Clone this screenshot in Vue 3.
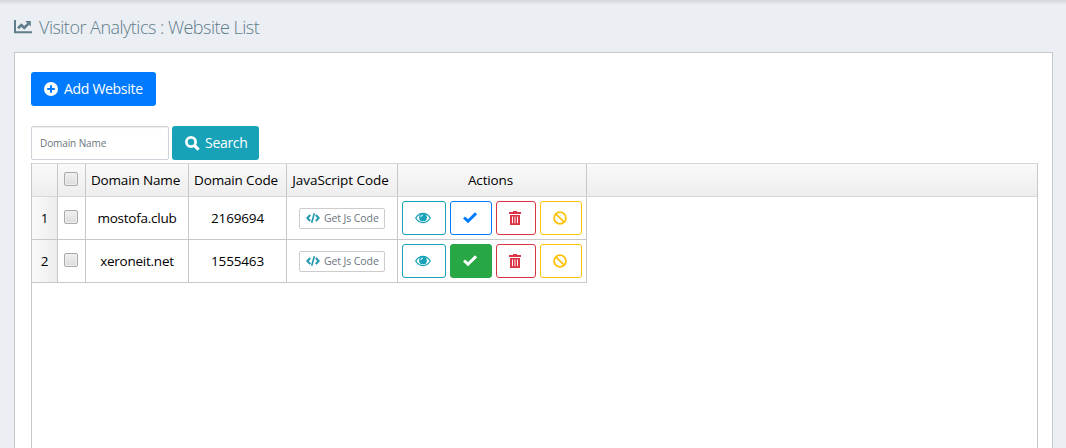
<script setup>
const rows = [
  { id: 1, domain: 'mostofa.club', code: '2169694', active: false },
  { id: 2, domain: 'xeroneit.net', code: '1555463', active: true },
]
</script>

<template>
  <div class="page">
    <h1 class="title">
      <svg class="chart" viewBox="0 0 18 14" width="18" height="14">
        <path d="M1 0v12.2h17" fill="none" stroke="currentColor" stroke-width="2" />
        <path d="M4 8.2L7.3 5L10.3 7.8L14.5 3.6" fill="none" stroke="currentColor" stroke-width="2.7" />
        <path d="M11.2 1H16.8V6.6Z" fill="currentColor" />
      </svg>
      <span>Visitor Analytics : Website List</span>
    </h1>
    <main class="panel">
      <button class="btn add">
        <svg viewBox="0 0 14 14" width="14" height="14">
          <circle cx="7" cy="7" r="7" fill="#fff" />
          <path d="M7 3.2v7.6M3.2 7h7.6" stroke="#007bff" stroke-width="2" />
        </svg>
        <span>Add Website</span>
      </button>
      <div class="toolbar">
        <input class="field" type="text" placeholder="Domain Name" />
        <button class="btn search">
          <svg viewBox="0 0 15 15" width="15" height="15">
            <circle cx="6" cy="6" r="4.6" fill="none" stroke="#fff" stroke-width="2.8" />
            <path d="M9.3 9.3L13.6 13.6" stroke="#fff" stroke-width="3.2" />
          </svg>
          <span>Search</span>
        </button>
      </div>
      <section class="grid">
        <div class="row head">
          <div class="cell"></div>
          <div class="cell"><i class="box"></i></div>
          <div class="cell"><span>Domain Name</span></div>
          <div class="cell"><span>Domain Code</span></div>
          <div class="cell"><span class="wide">JavaScript Code</span></div>
          <div class="cell"><span>Actions</span></div>
        </div>
        <div v-for="r in rows" :key="r.id" class="row body">
          <div class="cell num">{{ r.id }}</div>
          <div class="cell"><i class="box"></i></div>
          <div class="cell domain"><span>{{ r.domain }}</span></div>
          <div class="cell"><span>{{ r.code }}</span></div>
          <div class="cell">
            <button class="js">
              <svg viewBox="0 0 14 10" width="14" height="10" fill="none" stroke="#2397ad" stroke-width="2">
                <path d="M4.2 2L1.3 5L4.2 8M9.8 2L12.7 5L9.8 8" />
                <path d="M8.3 0.3L5.7 9.7" stroke-width="1.6" />
              </svg>
              <span>Get Js Code</span>
            </button>
          </div>
          <div class="cell actions">
            <button class="act view">
              <svg viewBox="0 0 16 12" width="16" height="12">
                <path d="M.7 6C4.3-.1 11.7-.1 15.3 6C11.7 12.1 4.3 12.1 .7 6Z" fill="none" stroke="currentColor" stroke-width="1.2" />
                <circle cx="8" cy="5.4" r="3.9" fill="currentColor" />
                <path d="M5.8 5.1Q5.9 3.1 8 3" fill="none" stroke="#fff" stroke-width="1" />
              </svg>
            </button>
            <button class="act check" :class="{ on: r.active }">
              <svg viewBox="0 0 14 11" width="14" height="11">
                <path d="M1 5.5L5 9.2L13 1.3" fill="none" stroke="currentColor" stroke-width="3" />
              </svg>
            </button>
            <button class="act trash">
              <svg viewBox="0 0 12 14" width="12" height="14">
                <path d="M0 1H4V0H8V1H12V3H0Z" fill="currentColor" />
                <path d="M1 4H11V14H1Z" fill="currentColor" />
                <path d="M3.5 5.5V12.2M6 5.5V12.2M8.5 5.5V12.2" stroke="#fff" stroke-width=".95" />
              </svg>
            </button>
            <button class="act ban">
              <svg viewBox="0 0 14 14" width="14" height="14" fill="none" stroke="currentColor" stroke-width="1.8">
                <circle cx="7" cy="7" r="5.9" />
                <path d="M2.8 2.8L11.2 11.2" />
              </svg>
            </button>
          </div>
        </div>
      </section>
    </main>
  </div>
</template>

<style>
html, body { margin: 0; overflow: hidden; }
</style>

<style scoped>
* { box-sizing: border-box; }
.page {
  height: 448px;
  overflow: hidden;
  padding: 0 13px 0 14px;
  background: linear-gradient(#d2d6db 0, #dde1e6 2px, #ebeef3 5px, #ebeef3 100%);
  font-family: "Open Sans", "Noto Sans", sans-serif;
  font-size: 13.5px;
  letter-spacing: -0.15px;
  color: #000;
}
svg { display: block; flex: none; }
span { white-space: nowrap; }
button { font: inherit; letter-spacing: inherit; padding: 0; margin: 0; }
.title {
  display: flex;
  align-items: center;
  gap: 7px;
  height: 52px;
  margin: 0;
  padding-top: 2px;
  font-size: 18px;
  font-weight: 300;
  color: #607d8b;
  letter-spacing: -0.51px;
}
.panel {
  height: 420px;
  padding: 19px 14px 0 16px;
  border: 1px solid #c8c8c8;
  background: #fff;
}
.btn {
  display: flex;
  align-items: center;
  height: 34px;
  border: 0;
  border-radius: 3px;
  color: #fff;
  font-size: 14px;
  letter-spacing: -0.3px;
}
.btn span { padding-bottom: 2px; }
.add { width: 125px; padding-left: 13px; gap: 6px; background: #007bff; }
.search { width: 87px; padding-left: 13px; gap: 5px; background: #17a2b8; }
.toolbar { display: flex; gap: 3px; margin-top: 20px; }
.field {
  width: 138px;
  height: 34px;
  padding: 0 8px;
  border: 1px solid #ced4da;
  border-radius: 2px;
  box-shadow: inset 0 1px 1px rgba(0, 0, 0, .08);
  font: 10px "Open Sans", sans-serif;
  letter-spacing: -0.1px;
}
.field::placeholder { color: #6c757d; opacity: 1; }
.grid {
  height: 300px;
  margin-top: 3px;
  border: solid #c8c8c8;
  border-width: 0 1px;
}
.row { display: grid; grid-template-columns: 26px 28px 103px 98px 111px 189px; }
.head {
  height: 34px;
  border-top: 1px solid #d8d8d8;
  border-bottom: 1px solid #d8d8d8;
  background: linear-gradient(#fafafa, #ededed);
}
.body { height: 43px; width: 555px; border-bottom: 1px solid #c8c8c8; }
.cell {
  display: flex;
  align-items: center;
  justify-content: center;
  border-right: 1px solid #c8c8c8;
  min-width: 0;
}
.head .cell { padding-right: 3px; }
.head .cell:nth-child(2), .body .cell:nth-child(2) { padding-right: 1px; }
.wide { letter-spacing: -0.05px; }
.domain { letter-spacing: -0.25px; }
.num { background: linear-gradient(90deg, #fafafa, #ededed); }
.box {
  width: 14px;
  height: 14px;
  margin-top: -2px;
  border: 1px solid #aaa;
  border-radius: 2px;
  background: linear-gradient(#f0f0f0, #dcdcdc);
  box-shadow: inset 0 0 0 1px #eee;
}
.js {
  display: flex;
  align-items: center;
  gap: 4px;
  width: 86px;
  height: 21px;
  padding-left: 6px;
  border: 1px solid #ccc;
  border-radius: 2px;
  background: #fff;
  color: #6c757d;
  font-size: 10.5px;
  letter-spacing: -0.1px;
}
.actions { justify-content: flex-start; gap: 4px; padding-left: 4px; }
.act {
  display: flex;
  align-items: center;
  justify-content: center;
  height: 34px;
  padding-right: 2px;
  border: 1px solid currentColor;
  border-radius: 3px;
  background: #fff;
}
.act svg { margin-top: -1px; }
.view { width: 44px; color: #17a2b8; }
.check { width: 42px; color: #007bff; }
.check.on { border-color: #28a745; background: #28a745; color: #fff; }
.trash { width: 40px; color: #dc3545; }
.ban { width: 42px; color: #ffc107; }
</style>
